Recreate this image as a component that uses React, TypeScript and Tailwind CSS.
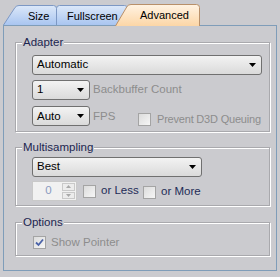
import React from "react";

const font = { fontFamily: '"Liberation Sans", Arial, sans-serif' };

const Arrow = () => (
  <svg width="7" height="4" viewBox="0 0 7 4" className="shrink-0">
    <path d="M0 0 H7 L3.5 4 Z" fill="#000" />
  </svg>
);

const Dropdown = ({ value, className }: { value: string; className: string }) => (
  <div
    className={`h-[20px] shrink-0 rounded-[3px] border border-[#707070] bg-gradient-to-b from-[#f3f3f3] to-[#dadada] flex items-center justify-between pl-[4px] pr-[5px] text-black ${className}`}
  >
    <span>{value}</span>
    <Arrow />
  </div>
);

const Check = ({ checked = false }: { checked?: boolean }) => (
  <div className="w-[13px] h-[13px] shrink-0 border border-[#a4a4a4] bg-gradient-to-br from-[#dcdcdc] to-[#f6f6f6] flex items-center justify-center">
    {checked && (
      <svg width="9" height="9" viewBox="0 0 9 9">
        <path d="M1 4.5 L3.5 7 L8 1.5" stroke="#4a62a8" strokeWidth="1.8" fill="none" />
      </svg>
    )}
  </div>
);

const Group = ({ label, className, children }: { label: string; className: string; children: React.ReactNode }) => (
  <div className={`relative border border-[#a9a9ad] shadow-[1px_1px_0_#ffffff,inset_1px_1px_0_#ffffff] ${className}`}>
    <span className="absolute -top-[8px] left-[6px] px-[1px] bg-[#cbcbcf] text-[#1c2550] leading-[14px] whitespace-nowrap">{label}</span>
    {children}
  </div>
);

const Tab = ({
  label,
  width,
  active = false,
  slant = false,
  className = "",
}: {
  label: string;
  width: number;
  active?: boolean;
  slant?: boolean;
  className?: string;
}) => {
  const h = active ? 22 : 20;
  const w = width;
  const d = slant
    ? `M0.5 ${h} L${12} 2.5 Q13.5 0.5 16 0.5 L${w - 3.5} 0.5 Q${w - 0.5} 0.5 ${w - 0.5} 3.5 L${w - 0.5} ${h}`
    : `M0.5 ${h} L0.5 3.5 Q0.5 0.5 3.5 0.5 L${w - 3.5} 0.5 Q${w - 0.5} 0.5 ${w - 0.5} 3.5 L${w - 0.5} ${h}`;
  const id = `g-${label}`;
  return (
    <div className={`relative shrink-0 ${className}`} style={{ width: w, height: h }}>
      <svg className="absolute inset-0" width={w} height={h}>
        <defs>
          <linearGradient id={id} x1="0" y1="0" x2="0" y2="1">
            <stop offset="0" stopColor={active ? "#fff3e3" : "#dce8f9"} />
            <stop offset="1" stopColor={active ? "#fcd6a6" : "#a9c5f0"} />
          </linearGradient>
        </defs>
        <path d={d + " Z"} fill={`url(#${id})`} />
        <path d={d} fill="none" stroke={active ? "#b8906a" : "#7d98c4"} />
      </svg>
      <span className="relative block text-black text-[11px] leading-[20px] pt-[1px] whitespace-nowrap">{label}</span>
    </div>
  );
};

export default function App() {
  return (
    <div className="w-[280px] h-[277px] bg-[#cbcbcf] text-[11.5px] overflow-hidden" style={font}>
      <div className="h-[25px] flex items-end pl-[3px] relative z-10">
        <Tab label="Size" width={54} slant className="[&>span]:pl-[25px]" />
        <Tab label="Fullscreen" width={72} className="-ml-[1px] [&>span]:pl-[11px]" />
        <Tab label="Advanced" width={85} active slant className="-ml-[13px] -mb-[1px] [&>span]:pl-[25px]" />
      </div>
      <div className="mx-[3px] h-[246px] border border-[#7f9db9] pt-[16px] pl-[11px] pr-[6px] flex flex-col">
        <Group label="Adapter" className="h-[90px] pt-[12px] pl-[16px] pr-[7px] flex flex-col gap-[5px]">
          <Dropdown value="Automatic" className="w-full" />
          <div className="flex items-center gap-[3px]">
            <Dropdown value="1" className="w-[58px]" />
            <span className="text-[#8d8d8d] whitespace-nowrap">Backbuffer Count</span>
          </div>
          <div className="flex items-center">
            <Dropdown value="Auto" className="w-[58px]" />
            <span className="text-[#8d8d8d] ml-[3px] w-[45px] shrink-0">FPS</span>
            <div className="flex items-center gap-[6px] mt-[6px] shrink-0">
              <Check />
              <span className="text-[#8d8d8d] text-[11px] tracking-[-0.2px] whitespace-nowrap">Prevent D3D Queuing</span>
            </div>
          </div>
        </Group>
        <Group label="Multisampling" className="mt-[15px] h-[59px] pt-[9px] pl-[16px] flex flex-col gap-[4px]">
          <Dropdown value="Best" className="w-[170px]" />
          <div className="flex items-center">
            <div className="w-[45px] h-[20px] shrink-0 border border-[#c9c9c9] bg-[#f1f1f1] flex items-center">
              <span className="flex-1 text-center text-[#8a9ac0] pl-[2px]">0</span>
              <div className="w-[13px] h-[18px] mr-[1px] flex flex-col gap-[1px] py-[1px]">
                <div className="flex-1 border border-[#c9c9c9] bg-[#ececec] flex items-center justify-center">
                  <svg width="5" height="3" viewBox="0 0 5 3"><path d="M0 3 L2.5 0 L5 3 Z" fill="#a8a8a8" /></svg>
                </div>
                <div className="flex-1 border border-[#c9c9c9] bg-[#ececec] flex items-center justify-center">
                  <svg width="5" height="3" viewBox="0 0 5 3"><path d="M0 0 L5 0 L2.5 3 Z" fill="#a8a8a8" /></svg>
                </div>
              </div>
            </div>
            <div className="flex items-center gap-[5px] ml-[6px] w-[60px] shrink-0">
              <Check />
              <span className="text-[#1e2b57] whitespace-nowrap">or Less</span>
            </div>
            <div className="flex items-center gap-[5px] mt-[2px] shrink-0">
              <Check />
              <span className="text-[#1e2b57] whitespace-nowrap">or More</span>
            </div>
          </div>
        </Group>
        <Group label="Options" className="mt-[16px] h-[34px] pt-[11px] pl-[17px]">
          <div className="flex items-center gap-[5px]">
            <Check checked />
            <span className="text-[#8d8d8d] whitespace-nowrap">Show Pointer</span>
          </div>
        </Group>
      </div>
    </div>
  );
}
